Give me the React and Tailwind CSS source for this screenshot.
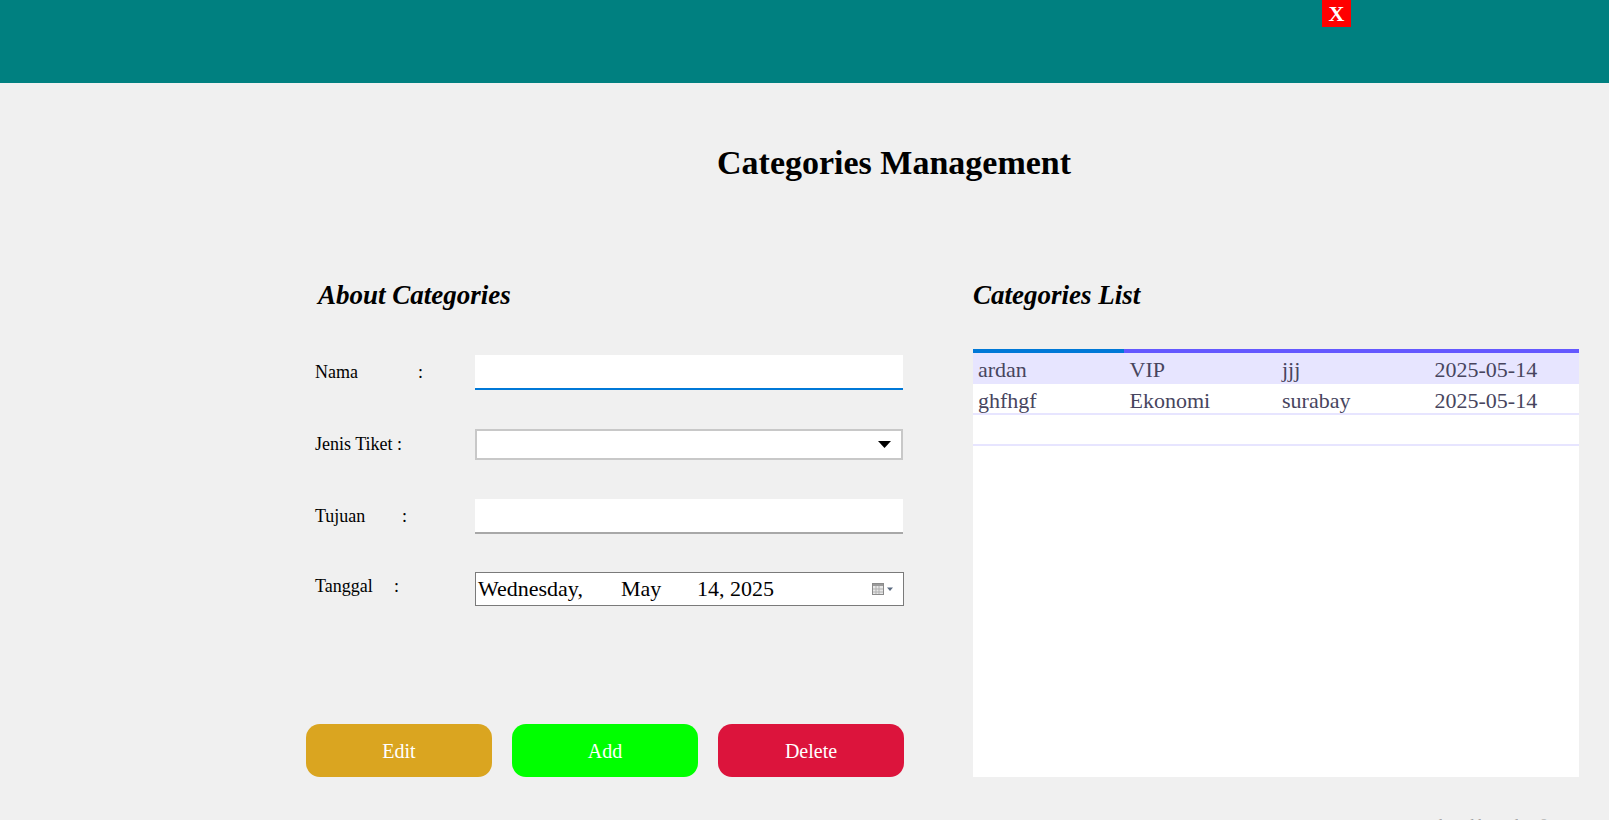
import React from 'react';

const rows = [
  { nama: 'ardan', jenis: 'VIP', tujuan: 'jjj', tanggal: '2025-05-14', selected: true },
  { nama: 'ghfhgf', jenis: 'Ekonomi', tujuan: 'surabay', tanggal: '2025-05-14' },
  { nama: '', jenis: '', tujuan: '', tanggal: '' },
];

const CalendarIcon = () => (
  <svg width="26" height="14" viewBox="0 0 26 14">
    <rect x="1.5" y="1.5" width="11" height="11" fill="#e8e8e8" stroke="#8a8a8a" />
    <rect x="2" y="2" width="10" height="2" fill="#9a9a9a" />
    <path d="M2 7h10M2 10h10M5 4v8M8 4v8" stroke="#b0b0b0" strokeWidth="1" />
    <path d="M16 5.5h6l-3 3.5z" fill="#5a6a80" />
  </svg>
);

const App = () => {
  return (
    <div className="min-h-screen bg-[#f0f0f0] font-['Liberation_Serif','Times_New_Roman',serif] text-black">
      <div className="h-[83px] bg-[#008080] flex justify-end pr-[258px]">
        <button className="w-[29px] h-[27px] bg-[#ff0000] text-white font-bold text-[22px] leading-none flex items-center justify-center">
          X
        </button>
      </div>

      <h1 className="mt-[60px] pl-[717px] text-[34px] leading-[40px] font-bold">Categories Management</h1>

      <div className="flex mt-[96px] pl-[306px]">
        {/* left form */}
        <div className="w-[598px]">
          <h2 className="pl-[12px] text-[27px] leading-[32px] font-bold italic">About Categories</h2>

          <div className="flex items-center mt-[44px]">
            <div className="w-[169px] pl-[9px] text-[18px] flex">
              <span className="w-[103px]">Nama</span>
              <span>:</span>
            </div>
            <input className="w-[428px] h-[35px] bg-white border-b-2 border-[#0078d7] outline-none px-1 text-[20px]" />
          </div>

          <div className="flex items-center mt-[39px]">
            <div className="w-[169px] pl-[9px] text-[18px]">Jenis Tiket :</div>
            <div className="w-[428px] h-[31px] bg-white border-2 border-[#c8c8c8] flex items-center justify-end pr-[10px]">
              <svg width="13" height="7" viewBox="0 0 13 7">
                <path d="M0 0h13L6.5 7z" fill="#000" />
              </svg>
            </div>
          </div>

          <div className="flex items-center mt-[39px]">
            <div className="w-[169px] pl-[9px] text-[18px] flex">
              <span className="w-[87px]">Tujuan</span>
              <span>:</span>
            </div>
            <input className="w-[428px] h-[35px] bg-white border-b-2 border-[#a8a8a8] outline-none px-1 text-[20px]" />
          </div>

          <div className="flex items-start mt-[38px]">
            <div className="w-[169px] pl-[9px] text-[18px] flex pt-[1px]">
              <span className="w-[79px]">Tanggal</span>
              <span>:</span>
            </div>
            <div className="w-[429px] h-[34px] bg-white border border-[#7a7a7a] flex items-center pl-[2px] pr-[6px] text-[22px] leading-none">
              <span className="w-[143px]">Wednesday,</span>
              <span className="w-[76px]">May</span>
              <span>14, 2025</span>
              <span className="ml-auto flex items-center"><CalendarIcon /></span>
            </div>
          </div>

          <div className="flex mt-[118px] gap-[20px]">
            <button className="w-[187px] h-[53px] rounded-[14px] bg-[#daa520] text-white text-[20px]">Edit</button>
            <button className="w-[187px] h-[53px] rounded-[14px] bg-[#00ff00] text-white text-[20px]">Add</button>
            <button className="w-[187px] h-[53px] rounded-[14px] bg-[#dc143c] text-white text-[20px]">Delete</button>
          </div>
        </div>

        {/* right list */}
        <div className="ml-[69px] w-[606px]">
          <h2 className="text-[27px] leading-[32px] font-bold italic">Categories List</h2>
          <div className="mt-[38px] h-[428px] bg-white">
            <div className="flex h-[4px]">
              <div className="w-[151px] bg-[#0078d7]" />
              <div className="flex-1 bg-[#6458ff]" />
            </div>
            {rows.map((r, i) => (
              <div
                key={i}
                className={`grid grid-cols-4 h-[31px] items-center text-[22px] text-[#47455e] border-b-2 border-[#e7e5ff] ${r.selected ? 'bg-[#e7e5ff]' : ''}`}
              >
                <span className="pl-[5px]">{r.nama}</span>
                <span className="pl-[5px]">{r.jenis}</span>
                <span className="pl-[6px]">{r.tujuan}</span>
                <span className="pl-[7px]">{r.tanggal}</span>
              </div>
            ))}
          </div>
        </div>
      </div>

      <div className="mt-[39px] pl-[1405px] text-[16px] leading-[20px] text-[#a0a0a0]">
        Developed by ardan © 2025 All Rights Reserved
      </div>
    </div>
  );
};

export default App;
